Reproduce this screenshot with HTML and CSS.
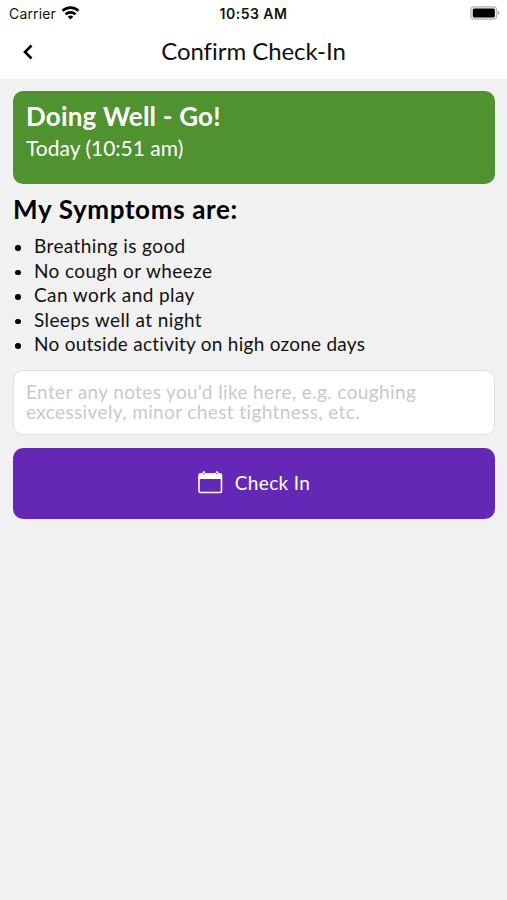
FILE: index.html
```html
<!DOCTYPE html>
<html lang="en">
<head>
<meta charset="utf-8">
<title>Confirm Check-In</title>
<link rel="stylesheet" href="styles.css">
</head>
<body>
<header class="top">
  <div class="status">
    <div class="carrier"><span>Carrier</span>
      <svg class="wifi" width="19" height="14" viewBox="0 0 18 14" fill="none" stroke="#000" stroke-width="2.7"><path d="M1 4.900a11.500 11.500 0 0 1 16 0M4 8.400a7.200 7.200 0 0 1 10 0"/><path d="M6.200 10.800a4 4 0 0 1 5.600 0L9 13.600z" fill="#000" stroke="none"/></svg>
    </div>
    <div class="time">10:53 AM</div>
    <svg class="battery" width="30" height="14" viewBox="0 0 30 14"><rect x=".8" y=".8" width="26" height="12.400" rx="3.500" fill="#eee" stroke="#b5b5b5" stroke-width="1.200"/><rect x="2.800" y="2.600" width="22" height="8.800" rx="1.500"/><path d="M28 4.800q3 2.200 0 4.400z" fill="#aaa"/></svg>
  </div>
  <nav class="nav">
    <svg class="back" width="10" height="16" viewBox="0 0 10 16" fill="none" stroke="#000" stroke-width="2.600"><path d="M8.500 1.500 2 8l6.500 6.500"/></svg>
    <h1>Confirm Check-In</h1>
  </nav>
</header>
<main>
  <section class="card"><h2>Doing Well - Go!</h2><p>Today (10:51 am)</p></section>
  <h2 class="heading">My Symptoms are:</h2>
  <ul class="list">
    <li>Breathing is good</li>
    <li>No cough or wheeze</li>
    <li>Can work and play</li>
    <li>Sleeps well at night</li>
    <li class="long">No outside activity on high ozone days</li>
  </ul>
  <p class="notes">Enter any notes you'd like here, e.g. coughing<br>excessively, minor chest tightness, etc.</p>
  <button class="check">
    <svg width="25" height="23" viewBox="0 0 25 23" fill="none" stroke="#fff"><rect x="1" y="3" width="22.500" height="18.500" rx="1.500" stroke-width="1.600"/><path d="M1 5.300h22.500" stroke-width="5.400"/><path d="M5.800 1.500v3M19 1.500v3" stroke-width="2.600" stroke-linecap="round"/><path d="M5.800 2v1.500M19 2v1.500" stroke="#6528b6" stroke-width="1"/></svg>
    <span>Check In</span>
  </button>
</main>
</body>
</html>
```
FILE: styles.css
```css
* { box-sizing: border-box; margin: 0; padding: 0; }
body { background: #f1f1f1; color: #111; font-family: Lato, sans-serif; font-variant-ligatures: none; }
.top { height: 79px; background: #fff; }
.status { height: 27px; padding: 0 7px 0 9px; display: grid; grid-template-columns: 1fr auto 1fr; align-items: center; font: 14px/27px Inter, sans-serif; }
.carrier { display: flex; gap: 5px; align-items: center; letter-spacing: .15px; }
.wifi { margin-top: -2px; }
.time { font-weight: 600; letter-spacing: .5px; margin-right: 2px; }
.battery { justify-self: end; margin-top: -1px; }
.nav { height: 50px; display: grid; grid-template-columns: 40px 1fr 40px; align-items: center; }
.back { justify-self: end; margin-right: 7px; }
h1 { font-size: 24px; font-weight: 400; line-height: 48px; text-align: center; letter-spacing: -.05px; padding-bottom: 2px; }
main { padding: 12px 12px 0 13px; }
.card { height: 93px; border-radius: 10px; background: #4f922f; color: #fff; padding: 9px 13px; }
.card h2 { font-size: 26px; line-height: 33px; letter-spacing: .2px; }
.card p { font-size: 21px; line-height: 29px; }
.heading { color: #000; font-size: 26px; line-height: 32px; margin-top: 9px; letter-spacing: .65px; }
.list { list-style: none; margin-top: 9px; }
.list li { font-size: 19px; line-height: 24.5px; letter-spacing: .4px; display: flex; align-items: center; }
.list .long { letter-spacing: .26px; }
.list li::before { content: ""; width: 5.5px; height: 5.5px; border-radius: 50%; background: #000; margin: 3px 13.5px 0 2px; }
.notes { margin-top: 13.5px; height: 65px; border: 1px solid #e0e0e1; border-radius: 10px; background: #fff; color: #c9c9cb; padding: 10.5px 12px; font-size: 19px; line-height: 20px; letter-spacing: .38px; white-space: nowrap; }
.check { margin-top: 13px; width: 100%; height: 71px; border: 0; border-radius: 10px; background: #6528b6; color: #fff; display: flex; justify-content: center; align-items: center; gap: 12px; padding: 0 0 2px; font: 19px Lato, sans-serif; letter-spacing: .35px; }
```
